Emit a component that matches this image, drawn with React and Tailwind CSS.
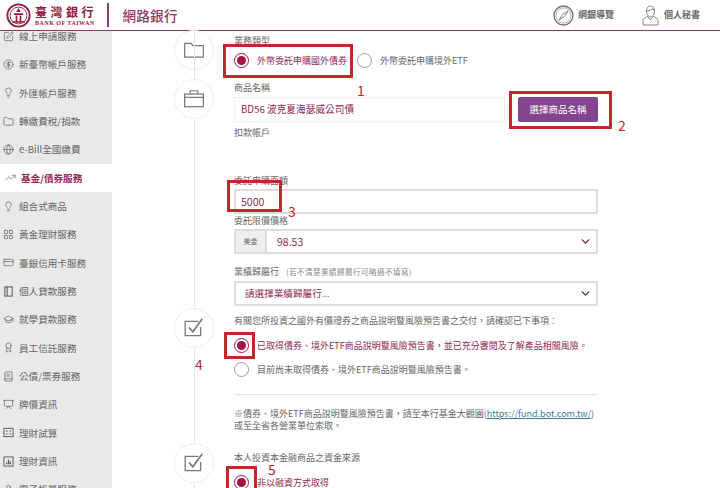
import {
  SquarePen, CircleDollarSign, Lightbulb, Folder, Globe, TrendingUp, LayoutGrid, CreditCard,
  GraduationCap, Award, BookText, Presentation, ChevronDown, User,
} from 'lucide-react';

// icons the package has no close match for
const PanelBook = (p) => (
  <svg width={p.size} height={p.size} viewBox="0 0 12 12" fill="none" stroke="currentColor" strokeWidth="1.1" className={p.className}>
    <rect x="2" y="1" width="8" height="10" />
    <path d="M4.5 1V11" />
  </svg>
);
const CalcGrid = (p) => (
  <svg width={p.size} height={p.size} viewBox="0 0 12 12" fill="none" stroke="currentColor" strokeWidth="1" className={p.className}>
    <rect x="1" y="1.5" width="10" height="9" />
    <path d="M3 4.5H5M7 4.5H9M3 7.5H5M7 7.5H9" />
  </svg>
);
const ChartBox = (p) => (
  <svg width={p.size} height={p.size} viewBox="0 0 12 12" fill="none" stroke="currentColor" strokeWidth="1" className={p.className}>
    <rect x="1" y="1" width="10" height="10" />
    <path d="M4 9V7M6 9V4M8 9V6" strokeWidth="1.4" />
  </svg>
);
const FolderBox = ({ size, className }) => (
  <svg width={size} height={size} viewBox="0 0 20 20" fill="none" stroke="currentColor" strokeWidth="1.1" className={className}>
    <path d="M1.5 4H7.5L9 6H18.5V16.5H1.5Z" />
  </svg>
);
const CaseBox = ({ size, className }) => (
  <svg width={size} height={size} viewBox="0 0 20 20" fill="none" stroke="currentColor" strokeWidth="1.1" className={className}>
    <rect x="1.5" y="5.5" width="17" height="11.5" />
    <path d="M6.5 5.5V2.5H13.5V5.5M1.5 8.5H18.5" />
  </svg>
);
const CheckBox = ({ size, className }) => (
  <svg width={size} height={size} viewBox="0 0 20 20" fill="none" stroke="currentColor" strokeWidth="1.2" className={className}>
    <path d="M14 4H2V17H16V9" />
    <path d="M5.5 9.5L9 13.5L17.5 1.5" strokeWidth="1.5" />
  </svg>
);
const CompassRing = () => (
  <svg width="21" height="21" viewBox="0 0 21 21" fill="none" stroke="#777" className="shrink-0">
    <circle cx="10.5" cy="10.5" r="9.5" strokeWidth="1.4" />
    <circle cx="10.5" cy="10.5" r="7.6" strokeWidth="0.6" />
    <path d="M15 6L11.5 11.5L6 15L9.5 9.5Z" strokeWidth="0.9" />
  </svg>
);
const Secretary = () => (
  <svg width="17" height="21" viewBox="0 0 17 21" fill="none" stroke="#777" strokeWidth="0.9" className="shrink-0">
    <path d="M4.5 6C4.5 3 6 1 8.5 1S12.5 3 12.5 6C12.5 9.5 10.5 12 8.5 12S4.5 9.5 4.5 6Z" />
    <path d="M4.5 6C7 6 9.5 5 10.5 3.5C11 5 12 5.8 12.5 6" />
    <path d="M5.5 11.5C3 12.5 1 13.5 1 15.5V20H16V15.5C16 13.5 14 12.5 11.5 11.5L8.5 15Z" />
  </svg>
);

const MENU = [
  { label: '線上申請服務', icon: SquarePen },
  { label: '新臺幣帳戶服務', icon: CircleDollarSign },
  { label: '外匯帳戶服務', icon: Lightbulb },
  { label: '轉繳費稅/捐款', icon: Folder },
  { label: 'e-Bill全國繳費', icon: Globe },
  { label: '基金/債券服務', icon: TrendingUp, active: true },
  { label: '組合式商品', icon: Lightbulb },
  { label: '黃金理財服務', icon: LayoutGrid },
  { label: '臺銀信用卡服務', icon: CreditCard },
  { label: '個人貸款服務', icon: PanelBook },
  { label: '就學貸款服務', icon: GraduationCap },
  { label: '員工信託服務', icon: Award },
  { label: '公債/票券服務', icon: BookText },
  { label: '牌價資訊', icon: Presentation },
  { label: '理財試算', icon: CalcGrid },
  { label: '理財資訊', icon: ChartBox },
  { label: '電子帳單服務', icon: User },
];

function Radio({ checked, label, className }) {
  return (
    <label className={`flex items-center gap-[8px] ${className || ''}`}>
      <span className={`flex h-[15px] w-[15px] shrink-0 items-center justify-center rounded-full border ${checked ? 'border-[#a3143f]' : 'border-[#999]'}`}>
        {checked && <span className="h-[9px] w-[9px] rounded-full bg-[#a3143f]" />}
      </span>
      <span className={checked ? 'text-[#8e2a55]' : 'text-[#666]'}>{label}</span>
    </label>
  );
}

function StepIcon({ icon: Icon }) {
  return (
    <div className="z-10 flex h-[40px] w-[40px] items-center justify-center rounded-full border border-[#eee] bg-white">
      <Icon size={22} className="text-[#777]" />
    </div>
  );
}

function Callout({ className, num, numClass }) {
  return (
    <>
      <div className={`absolute border-[3px] border-[#c1272d] ${className}`} />
      <span className={`absolute text-[14px] leading-none text-[#c1272d] ${numClass}`}>{num}</span>
    </>
  );
}

export default function App() {
  return (
    <div className="relative h-[488px] w-[720px] overflow-hidden bg-white font-['Noto_Sans_CJK_TC','Noto_Sans',sans-serif] text-[9px] text-[#666]">
      <header className="flex h-[31px] items-center border-b border-[#8e3a63] bg-white">
        <div className="flex w-[107px] items-center pl-[6px]">
          <svg width="25" height="25" viewBox="0 0 22 22" className="shrink-0 text-[#8f1d3f]">
            <circle cx="11" cy="11" r="9.8" fill="none" stroke="currentColor" strokeWidth="1.6" />
            <circle cx="11" cy="11" r="7.4" fill="none" stroke="currentColor" strokeWidth="0.8" />
            <path d="M11 4.5 L13 8 H9 Z M7 9 H15 V10.5 H7 Z M8.5 11 H10 V16 H8.5 Z M12 11 H13.5 V16 H12 Z M5.5 16 H16.5 V17.3 H5.5 Z" fill="currentColor" />
          </svg>
          <div className="ml-[4px] flex flex-col">
            <span className="whitespace-nowrap font-['Noto_Sans_CJK_TC',serif] text-[12px] font-bold leading-[15px] tracking-[3.5px] text-[#8f1d3f]">臺灣銀行</span>
            <span className="whitespace-nowrap font-['Liberation_Serif',serif] text-[6px] font-bold leading-[8px] tracking-[0.5px] text-[#8f1d3f]">BANK OF TAIWAN</span>
          </div>
        </div>
        <div className="h-[24px] w-[1.5px] bg-[#8e3a63]" />
        <span className="ml-[14px] text-[13.6px] font-medium tracking-[0.2px] text-[#8e3a63]">網路銀行</span>
        <div className="ml-auto flex items-center pr-[20px] text-[9px] font-bold text-[#666]">
          <CompassRing />
          <span className="ml-[4px]">網銀導覽</span>
          <span className="ml-[28px]"><Secretary /></span>
          <span className="ml-[5px]">個人秘書</span>
        </div>
      </header>

      <div className="flex h-[457px]">
        <nav className="w-[112px] shrink-0 overflow-hidden bg-[#e9e9e9]">
          <ul className="-mt-[9px]">
            {MENU.map(({ label, icon: Icon, active }) => (
              <li
                key={label}
                className={`flex h-[28.35px] items-center gap-[5px] text-[9.6px] ${active ? 'bg-white pl-[5px] font-bold text-[#9c2a55]' : 'pl-[3px] text-[#666]'}`}
              >
                <Icon size={11} strokeWidth={1.4} className="shrink-0 text-[#555]" />
                <span>{label}</span>
              </li>
            ))}
          </ul>
        </nav>

        <main className="relative min-w-0 flex-1">
          <div className="absolute bottom-0 left-[81.5px] top-0 w-px bg-[#e5e5e5]" />

          <section className="flex h-[48px] pl-[62px]">
            <div className="-mt-[1px]"><StepIcon icon={FolderBox} /></div>
            <div className="ml-[20px] w-[364px] pt-[4px]">
              <p className="leading-[12px]">業務類型</p>
              <div className="mt-[6px] flex items-center gap-[8px]">
                <Radio checked label="外幣委託申購國外債券" />
                <Radio label="外幣委託申購境外ETF" className="ml-[2px]" />
              </div>
            </div>
          </section>

          <section className="flex h-[229px] pl-[62px]">
            <StepIcon icon={CaseBox} />
            <div className="ml-[20px] w-[364px] pt-[3px]">
              <p className="leading-[12px]">商品名稱</p>
              <div className="mt-[3px] flex items-center justify-between">
                <div className="flex h-[25px] w-[271px] items-center border border-[#eee] px-[6px] text-[9.7px] text-[#8e2a55]">BD56 波克夏海瑟威公司債</div>
                <button className="flex h-[25px] w-[80px] items-center justify-center rounded-[2px] bg-[#84448f] text-[9.5px] text-white">選擇商品名稱</button>
              </div>
              <p className="mt-[5px] leading-[12px]">扣款帳戶</p>

              <p className="mt-[36px] leading-[12px]">委託申購面額</p>
              <div className="mt-[2px] flex h-[25px] items-center border-2 border-[#ddd] px-[5px] text-[10.5px] text-[#8e2a55]">5000</div>

              <p className="mt-[1px] leading-[12px]">委託限價價格</p>
              <div className="mt-[2px] flex h-[25px] items-center border-2 border-[#ddd] text-[10.5px] text-[#8e2a55]">
                <span className="flex h-full w-[31px] items-center justify-center border-r-2 border-[#ddd] bg-[#eee] text-[7px] text-[#666]">美金</span>
                <span className="ml-[10px]">98.53</span>
                <ChevronDown size={13} strokeWidth={2.5} className="ml-auto mr-[4px] text-[#7a1f45]" />
              </div>

              <p className="mt-[12px] flex items-center leading-[12px]">
                業績歸屬行
                <span className="ml-[7px] text-[7.5px] tracking-[0.5px] text-[#888]">(若不清楚業績歸屬行可略過不填寫)</span>
              </p>
              <div className="mt-[3px] flex h-[25px] items-center border-2 border-[#ddd] pl-[9px] text-[9.6px] text-[#8e2a55]">
                請選擇業績歸屬行...
                <ChevronDown size={13} strokeWidth={2.5} className="ml-auto mr-[4px] text-[#7a1f45]" />
              </div>
            </div>
          </section>

          <section className="flex h-[135px] pl-[62px]">
            <StepIcon icon={CheckBox} />
            <div className="ml-[20px] w-[364px] pt-[7px]">
              <p className="leading-[12px]">{'有關您所投資之國外有價證券之商品說明暨風險預告書之交付\uFF0C請確認已下事項\uFF1A'}</p>
              <Radio checked label={'已取得債券、境外ETF商品說明暨風險預告書\uFF0C並已充分審閱及了解產品相關風險。'} className="mt-[11px]" />
              <Radio label="目前尚未取得債券、境外ETF商品說明暨風險預告書。" className="mt-[9px]" />
              <hr className="mt-[17px] border-[#e5e5e5]" />
              <p className="mt-[13px] whitespace-nowrap leading-[12px]">
                {'※債券、境外ETF商品說明暨風險預告書\uFF0C請至本行基金大觀園('}<span className="text-[#3a7a94] underline">https://fund.bot.com.tw/</span>)
              </p>
              <p className="leading-[12px]">或至全省各營業單位索取。</p>
            </div>
          </section>

          <section className="flex pl-[62px]">
            <StepIcon icon={CheckBox} />
            <div className="ml-[20px] w-[364px] pt-[9px]">
              <p className="leading-[12px]">本人投資本金融商品之資金來源</p>
              <Radio checked label="非以融資方式取得" className="mt-[11px]" />
            </div>
          </section>
        </main>
      </div>

      <Callout className="left-[223px] top-[44px] h-[34px] w-[130px]" num="1" numClass="left-[357px] top-[83px]" />
      <Callout className="left-[509px] top-[91px] h-[38px] w-[103px]" num="2" numClass="left-[618px] top-[118px]" />
      <Callout className="left-[227px] top-[180px] h-[32px] w-[55px]" num="3" numClass="left-[288px] top-[204px]" />
      <Callout className="left-[224px] top-[332px] h-[27px] w-[31px]" num="4" numClass="left-[195px] top-[357px]" />
      <Callout className="left-[226px] top-[466px] h-[26px] w-[31px]" num="5" numClass="left-[268px] top-[462px]" />
    </div>
  );
}
